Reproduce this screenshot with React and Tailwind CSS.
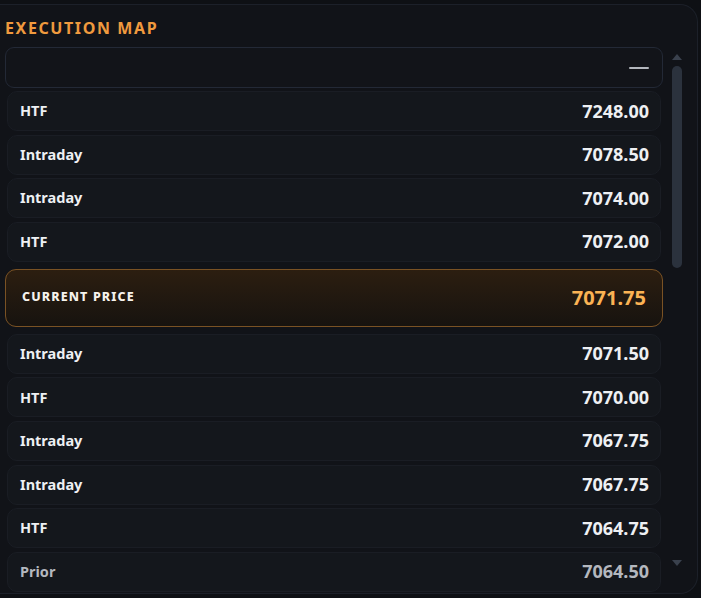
// Execution map panel — level list around the current price
const levelsAbove = [
  { label: 'HTF', price: '7248.00' },
  { label: 'Intraday', price: '7078.50' },
  { label: 'Intraday', price: '7074.00' },
  { label: 'HTF', price: '7072.00' },
];

const levelsBelow = [
  { label: 'Intraday', price: '7071.50' },
  { label: 'HTF', price: '7070.00' },
  { label: 'Intraday', price: '7067.75' },
  { label: 'Intraday', price: '7067.75' },
  { label: 'HTF', price: '7064.75' },
  { label: 'Prior', price: '7064.50', dim: true },
];

const LevelRow = ({ label, price, dim }) => (
  <div className="mx-[2px] h-[40px] shrink-0 flex items-center justify-between rounded-[10px] border border-[#1a1d24] bg-[#14171c] pl-[12px] pr-[11px]">
    <span className={`text-[14.5px] font-bold ${dim ? 'text-[#b4b8bf]' : 'text-[#eef0f3]'}`}>{label}</span>
    <span className={`text-[18px] font-bold ${dim ? 'text-[#b4b8bf]' : 'text-[#eef0f3]'}`}>{price}</span>
  </div>
);

const App = () => {
  return (
    <div
      className="w-[701px] h-[598px] overflow-hidden bg-[#0e1014] pt-[4px]"
      style={{ fontFamily: '"Noto Sans", "Open Sans", sans-serif' }}
    >
      <div className="w-[698px] h-[590px] overflow-hidden rounded-r-[18px] border border-l-0 border-[#1c2029] bg-[#111318] pl-[5px] pt-[13px]">
        {/* Title */}
        <h2 className="text-[16px] leading-[20px] font-bold tracking-[0.1em] text-[#f09a3e]">
          EXECUTION MAP
        </h2>

        <div className="mt-[9px] flex">
          {/* List column */}
          <div className="w-[658px] flex flex-col">
            {/* Search / filter box */}
            <div className="h-[41px] shrink-0 flex items-center justify-end rounded-[9px] border border-[#232936] bg-[#121419] pr-[13px]">
              <div className="w-[20px] h-[2px] rounded-full bg-[#b3b7bd]" />
            </div>

            <div className="mt-[3px] flex flex-col gap-[3.6px]">
              {levelsAbove.map((l, i) => (
                <LevelRow key={i} {...l} />
              ))}
            </div>

            {/* Current price */}
            <div className="mt-[7px] h-[58px] shrink-0 flex items-center justify-between rounded-[11px] border border-[#7a5224] bg-gradient-to-b from-[#2c1e10] to-[#17130f] pl-[16px] pr-[16px]">
              <span className="text-[12.5px] font-extrabold tracking-[0.09em] text-[#f6f2ec]">CURRENT PRICE</span>
              <span className="text-[20px] font-bold text-[#fbb354]">7071.75</span>
            </div>

            <div className="mt-[7px] flex flex-col gap-[3.6px]">
              {levelsBelow.map((l, i) => (
                <LevelRow key={i} {...l} />
              ))}
            </div>
          </div>

          {/* Scrollbar */}
          <div className="ml-[9px] w-[10px] flex flex-col items-center pt-[7px]">
            <svg width="10" height="6" viewBox="0 0 10 6">
              <path d="M5 0 L10 6 L0 6 Z" fill="#3a414d" />
            </svg>
            <div className="mt-[6px] w-[10px] h-[202px] rounded-full bg-[#2b323d]" />
            <div className="h-[292px]" />
            <svg width="10" height="6" viewBox="0 0 10 6">
              <path d="M0 0 L10 0 L5 6 Z" fill="#3a414d" />
            </svg>
          </div>
        </div>
      </div>
    </div>
  );
};

export default App;
